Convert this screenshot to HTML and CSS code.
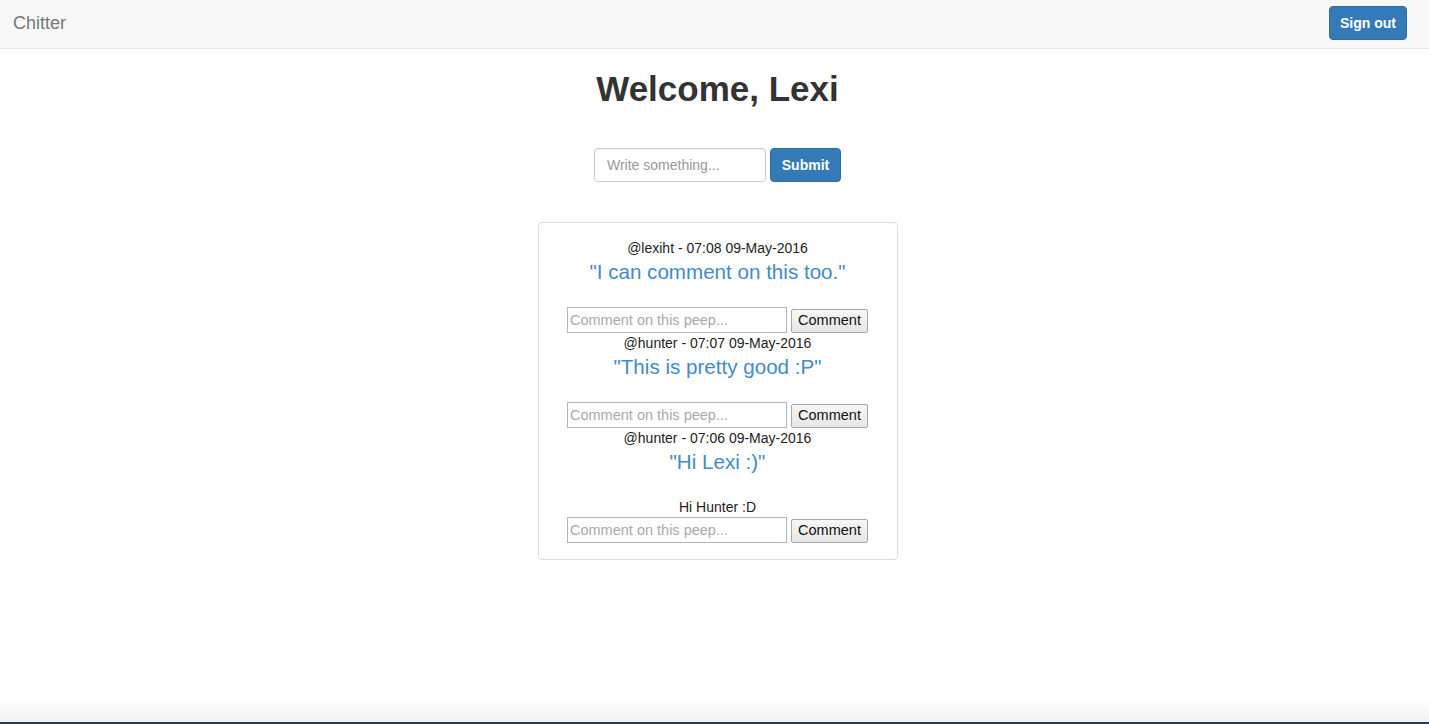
FILE: index.html
```html
<!DOCTYPE html>
<html lang="en">
<head>
<meta charset="utf-8">
<title>Chitter</title>
<link rel="stylesheet" href="styles.css">
</head>
<body>
<div class="page">
  <nav class="navbar">
    <a class="brand" href="#">Chitter</a>
    <button class="btn btn-primary signout" type="button">Sign out</button>
  </nav>

  <main class="main">
    <h1 class="welcome">Welcome, Lexi</h1>

    <form class="peep-form">
      <input class="form-control" type="text" placeholder="Write something...">
      <button class="btn btn-primary" type="button">Submit</button>
    </form>

    <section class="peeps">
      <article class="peep">
        <div class="peep-meta">@lexiht - 07:08 09-May-2016</div>
        <p class="peep-text">"I can comment on this too."</p>
        <form class="comment-form">
          <input class="comment-input" type="text" placeholder="Comment on this peep...">
          <button class="comment-btn" type="button">Comment</button>
        </form>
      </article>

      <article class="peep">
        <div class="peep-meta">@hunter - 07:07 09-May-2016</div>
        <p class="peep-text">"This is pretty good :P"</p>
        <form class="comment-form">
          <input class="comment-input" type="text" placeholder="Comment on this peep...">
          <button class="comment-btn" type="button">Comment</button>
        </form>
      </article>

      <article class="peep">
        <div class="peep-meta">@hunter - 07:06 09-May-2016</div>
        <p class="peep-text">"Hi Lexi :)"</p>
        <ul class="comments">
          <li class="comment">Hi Hunter :D</li>
        </ul>
        <form class="comment-form">
          <input class="comment-input" type="text" placeholder="Comment on this peep...">
          <button class="comment-btn" type="button">Comment</button>
        </form>
      </article>
    </section>
  </main>

  <div class="window-edge"></div>
</div>
</body>
</html>
```

FILE: styles.css
```css
* { box-sizing: border-box; }

html, body {
  margin: 0;
  padding: 0;
  height: 100%;
}

body {
  font-family: "Liberation Sans", Helvetica, Arial, sans-serif;
  font-size: 14px;
  line-height: 1.42857;
  color: #333;
  background: #fff;
}

.page {
  min-height: 100vh;
  display: flex;
  flex-direction: column;
}

/* Navbar */
.navbar {
  height: 49px;
  background: #f8f8f8;
  border-bottom: 1px solid #e7e7e7;
  display: flex;
  align-items: center;
  justify-content: space-between;
  padding: 0 22px 2px 13px;
}

.brand {
  color: #777;
  font-size: 18px;
  text-decoration: none;
  line-height: 20px;
}

.btn {
  font-family: inherit;
  font-size: 14px;
  font-weight: bold;
  height: 34px;
  padding: 0 6px;
  border-radius: 4px;
  border: 1px solid transparent;
  white-space: nowrap;
  cursor: pointer;
}

.btn-primary {
  color: #fff;
  background: #337ab7;
  border-color: #2e6da4;
}

.signout {
  width: 78px;
}

/* Main */
.main {
  flex: 1;
  display: flex;
  flex-direction: column;
  align-items: center;
  padding-left: 6px;
}

.welcome {
  font-size: 35px;
  font-weight: bold;
  line-height: 40px;
  margin: 20px 0 0;
  color: #333;
}

.peep-form {
  margin-top: 39px;
  display: flex;
  gap: 4px;
}

.form-control {
  width: 172px;
  height: 34px;
  padding: 6px 12px;
  font-family: inherit;
  font-size: 14px;
  color: #555;
  border: 1px solid #ccc;
  border-radius: 4px;
  box-shadow: inset 0 1px 1px rgba(0,0,0,.075);
}

.form-control::placeholder { color: #999; }

.peep-form .btn { width: 71px; }

/* Peeps card */
.peeps {
  margin-top: 40px;
  width: 360px;
  border: 1px solid #ddd;
  border-radius: 4px;
  padding: 15px 15px 16px;
  display: flex;
  flex-direction: column;
  align-items: center;
}

.peep {
  display: flex;
  flex-direction: column;
  align-items: center;
  width: 100%;
}

.peep-meta {
  color: #222;
  font-size: 14px;
  line-height: 20px;
}

.peep-text {
  color: #428bca;
  font-size: 20.6px;
  line-height: 24px;
  margin: 2px 0 23px;
}

.comments {
  list-style: none;
  margin: 0;
  padding: 0;
}

.comment {
  color: #222;
  font-size: 14px;
  line-height: 20px;
  text-align: center;
}

.comment-form {
  display: flex;
  align-items: center;
  gap: 4px;
  height: 26px;
}

.comment-input {
  width: 220px;
  height: 26px;
  padding: 1px 2px;
  font-family: inherit;
  font-size: 14.5px;
  color: #222;
  border: 1px solid #b5b5b5;
  border-radius: 0;
  background: #fff;
}

.comment-input::placeholder { color: #a9a9a9; }

.comment-btn {
  width: 77px;
  height: 24px;
  padding: 0 6px 1px;
  font-family: inherit;
  font-size: 14.5px;
  color: #111;
  background: linear-gradient(#f7f7f7, #e6e6e6);
  border: 1px solid #a8a8a8;
  border-radius: 2px;
  margin-top: 1px;
}

/* Bottom window edge */
.window-edge {
  height: 26px;
  background: linear-gradient(rgba(240,240,240,0), #f1f1f1 92%, #1f3a5a 92%);
}
```
